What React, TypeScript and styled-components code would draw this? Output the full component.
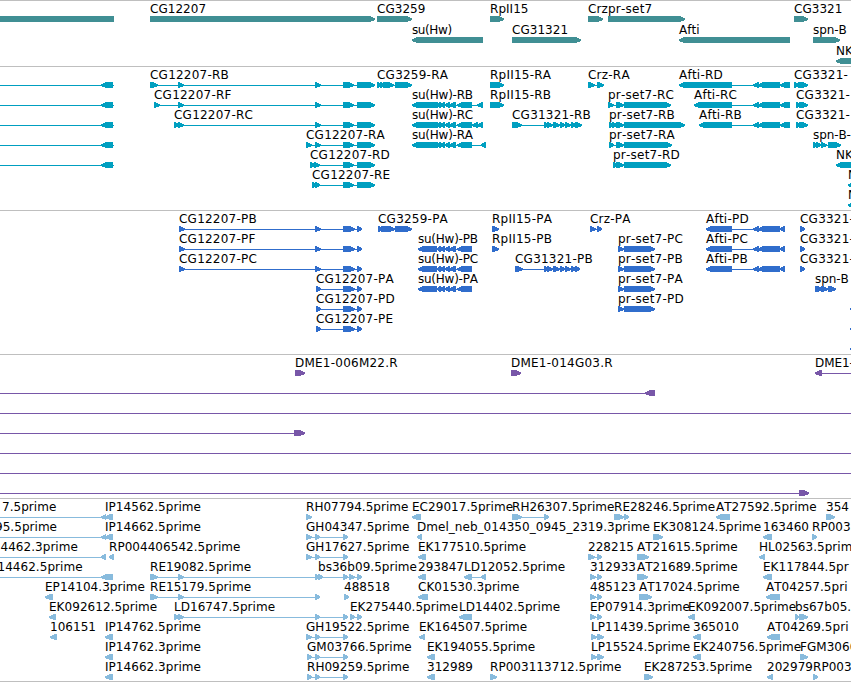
import styled, { createGlobalStyle } from 'styled-components'

type Dir = 'L' | 'R'

interface IFeature {
    label: string
    start: number
    end: number
    dir: Dir
    exons: number[]
}

interface ITrack {
    name: string
    color: string
    height: number
    gap?: number
    rows: IFeature[][]
}

// exons are flat [from, to, from, to...] pairs, none means one solid block
const R = (label: string, start: number, end: number, ...exons: number[]): IFeature =>
    ({ label, start, end, dir: 'R', exons: exons.length ? exons : [start, end] })

const L = (label: string, start: number, end: number, ...exons: number[]): IFeature =>
    ({ label, start, end, dir: 'L', exons: exons.length ? exons : [start, end] })

const rnaTail = [343, 354, 357, 375]
const rnaLong = [178, 184, 315, 321, ...rnaTail]
const cdsTail = [343, 355, 357, 362]
const suHw = [437, 441, 440, 445, 445, 450, 449, 456, 457, 472]
const afti = [753, 759, 758, 780]
const cg31321 = [544, 549, 547, 553, 553, 560, 560, 565, 565, 571, 571, 576]

const leftRna = L('', -20, 114, 101, 113)

const genes: IFeature[][] = [
    [
        L('', -20, 114),
        R('CG12207', 150, 375),
        R('CG3259', 377, 412),
        R('RpII15', 490, 504),
        R('Crz', 588, 603),
        R('pr-set7', 608, 685),
        R('CG3321', 794, 808),
    ],
    [
        L('su(Hw)', 412, 483),
        R('CG31321', 512, 581),
        L('Afti', 679, 790),
        R('spn-B', 813, 840),
    ],
    [L('NK', 836, 870)],
]

const transcripts: IFeature[][] = [
    [
        leftRna,
        R('CG12207-RB', 150, 375, 150, 158, ...rnaLong),
        R('CG3259-RA', 377, 412, 377, 381, 380, 385, 383, 394, 395, 412),
        R('RpII15-RA', 490, 504),
        R('Crz-RA', 588, 604, 588, 595, 597, 604),
        L('Afti-RD', 679, 790, 679, 732, ...afti, 780, 790),
        R('CG3321-', 794, 808, 794, 799, 798, 808),
    ],
    [
        leftRna,
        R('CG12207-RF', 154, 375, 154, 160, ...rnaLong),
        L('su(Hw)-RB', 412, 483, 412, 438, ...suHw, 477, 483),
        R('RpII15-RB', 490, 504),
        R('pr-set7-RC', 608, 671, 608, 614, 616, 624, 624, 671),
        L('Afti-RC', 694, 790, 694, 732, ...afti, 780, 790),
        R('CG3321-', 796, 808, 796, 800, 799, 808),
    ],
    [
        leftRna,
        R('CG12207-RC', 174, 375, 174, 179, ...rnaLong),
        L('su(Hw)-RC', 412, 483, 412, 438, ...suHw, 472, 478, 477, 483),
        R('CG31321-RB', 512, 582, 512, 522, ...cg31321, 575, 582),
        R('pr-set7-RB', 609, 685, 609, 613, 612, 617, 616, 624, 624, 685),
        L('Afti-RB', 699, 790, 699, 732, ...afti, 780, 790),
        R('CG3321-', 796, 808, 796, 800, 799, 808),
    ],
    [
        leftRna,
        R('CG12207-RA', 306, 375, 306, 312, 315, 321, ...rnaTail),
        L('su(Hw)-RA', 412, 486, 412, 438, ...suHw, 481, 486),
        R('pr-set7-RA', 609, 672, 609, 614, 616, 624, 624, 672),
        R('spn-B-', 813, 841, 813, 817, 816, 821, 821, 827, 828, 841),
    ],
    [
        leftRna,
        R('CG12207-RD', 310, 375, 310, 315, 314, 320, ...rnaTail),
        R('pr-set7-RD', 613, 671, 613, 618, 616, 624, 624, 671),
        L('NK', 836, 870),
    ],
    [
        R('CG12207-RE', 312, 375, 312, 316, 315, 320, ...rnaTail),
        L('N', 848, 870),
    ],
    [L('N', 848, 870)],
]

const proteins: IFeature[][] = [
    [
        R('CG12207-PB', 179, 362, 179, 185, 315, 321, ...cdsTail),
        R('CG3259-PA', 378, 412, 378, 382, 381, 386, 383, 395, 395, 412),
        R('RpII15-PA', 492, 499),
        R('Crz-PA', 590, 602, 590, 596, 597, 602),
        L('Afti-PD', 706, 785, 706, 732, ...afti, 780, 785),
        R('CG3321-', 800, 805),
    ],
    [
        R('CG12207-PF', 179, 362, 179, 185, 315, 321, ...cdsTail),
        L('su(Hw)-PB', 418, 472, 418, 437, ...suHw),
        R('RpII15-PB', 492, 499),
        R('pr-set7-PC', 618, 655, 618, 624, 624, 655),
        L('Afti-PC', 706, 785, 706, 732, ...afti, 780, 785),
        R('CG3321-', 800, 805),
    ],
    [
        R('CG12207-PC', 179, 362, 179, 185, 315, 321, ...cdsTail),
        L('su(Hw)-PC', 418, 472, 418, 437, ...suHw),
        R('CG31321-PB', 515, 580, 515, 523, ...cg31321, 575, 580),
        R('pr-set7-PB', 618, 655, 618, 624, 624, 655),
        L('Afti-PB', 706, 785, 706, 732, ...afti, 780, 785),
        R('CG3321-', 800, 805),
    ],
    [
        R('CG12207-PA', 316, 362, 316, 321, ...cdsTail),
        L('su(Hw)-PA', 418, 472, 418, 437, ...suHw),
        R('pr-set7-PA', 618, 655, 618, 624, 624, 655),
        R('spn-B', 815, 836, 815, 819, 817, 822, 821, 828, 828, 836),
    ],
    [
        R('CG12207-PD', 316, 362, 316, 321, ...cdsTail),
        R('pr-set7-PD', 618, 655, 618, 624, 624, 655),
        L('', 850, 870),
    ],
    [
        R('CG12207-PE', 316, 362, 316, 321, ...cdsTail),
        L('', 850, 870),
    ],
    [L('', 850, 870)],
]

const bacs: IFeature[][] = [
    [
        R('DME1-006M22.R', 295, 305),
        R('DME1-014G03.R', 511, 521),
        L('DME1-', 815, 870, 815, 822),
    ],
    [L('', -20, 655, 645, 655)],
    [L('', -20, 870, -20, -10)],
    [R('', -20, 305, 294, 305)],
    [L('', -20, 870, -20, -10)],
    [L('', -20, 870, -20, -10)],
    [R('', -20, 809, 799, 809)],
]

const ests: IFeature[][] = [
    [
        L('7.5prime', 2, 2),
        L('', -20, 106, 101, 107),
        L('IP14562.5prime', 105, 113),
        R('RH07794.5prime', 306, 312),
        L('EC29017.5prime', 412, 421),
        R('RH26307.5prime', 512, 549, 512, 522, 544, 549),
        R('RE28246.5prime', 614, 629, 614, 624, 624, 629),
        L('AT27592.5prime', 716, 730),
        R('354', 826, 835),
    ],
    [
        L('95.5prime', -5, -5),
        L('', -20, 106, 101, 107),
        L('IP14662.5prime', 105, 113),
        R('GH04347.5prime', 306, 348, 306, 312, 315, 320, 343, 348),
        L('Dmel_neb_014350_0945_2319.3prime', 417, 422),
        R('EK308124.5prime', 653, 663),
        L('163460', 763, 772),
        R('RP003', 812, 817),
    ],
    [
        L('4462.3prime', 0.5, 0.5),
        L('', -20, 106, 101, 106),
        L('RP004406542.5prime', 109, 114),
        R('GH17627.5prime', 306, 348, 306, 312, 315, 320, 343, 348),
        L('EK177510.5prime', 418, 426),
        R('228215', 588, 602, 588, 595, 597, 602),
        R('AT21615.5prime', 637, 649),
        L('HL02563.5prim', 759, 765),
    ],
    [
        L('14462.5prime', -2.5, -2.5),
        L('', -20, 113, 101, 113),
        R('RE19082.5prime', 150, 320, 150, 158, 178, 184, 315, 320),
        R('bs36b09.5prime', 318, 362, 318, 323, 343, 348, 349, 355, 357, 362),
        L('293847', 418, 426),
        L('LD12052.5prime', 464, 486, 464, 472, 481, 486),
        R('312933', 590, 602, 590, 596, 597, 602),
        R('AT21689.5prime', 637, 648),
        L('EK117844.5pr', 763, 772),
    ],
    [
        L('EP14104.3prime', 45, 53),
        R('RE15179.5prime', 150, 320, 150, 158, 178, 184, 315, 320),
        R('488518', 344, 349),
        L('CK01530.3prime', 418, 428),
        R('485123', 590, 602, 590, 596, 597, 602),
        R('AT17024.5prime', 639, 652),
        L('AT04257.5pri', 766, 780),
    ],
    [
        L('EK092612.5prime', 49, 56),
        R('LD16747.5prime', 174, 348, 174, 179, 178, 184, 315, 320, 343, 348),
        R('EK275440.5prime', 350, 362, 350, 355, 357, 362),
        L('LD14402.5prime', 459, 472),
        R('EP07914.3prime', 590, 602, 590, 596, 597, 602),
        L('EK092007.5prime', 688, 695),
        R('bs67b05.', 795, 808, 795, 799, 799, 808),
    ],
    [
        L('106151', 50, 57),
        L('IP14762.5prime', 105, 113),
        R('GH19522.5prime', 306, 348, 306, 312, 315, 320, 343, 348),
        L('EK164507.5prime', 419, 425),
        R('LP11439.5prime', 591, 604, 591, 597, 597, 604),
        L('365010', 693, 701),
        L('AT04269.5pri', 767, 780),
    ],
    [
        L('IP14762.3prime', 105, 113),
        R('GM03766.5prime', 307, 348, 307, 312, 315, 320, 343, 348),
        L('EK194055.5prime', 427, 435),
        R('LP15524.5prime', 591, 604, 591, 597, 597, 604),
        L('EK240756.5prime', 693, 701),
        R('FGM3060', 800, 808),
    ],
    [
        L('IP14662.3prime', 105, 113),
        R('RH09259.5prime', 307, 348, 307, 312, 315, 320, 343, 348),
        L('312989', 427, 435),
        R('RP003113712.5prime', 490, 497),
        R('EK287253.5prime', 644, 653),
        L('202979', 767, 773),
        R('RP003', 813, 818),
    ],
]

const tracks: ITrack[] = [
    { name: 'genes', color: '#408f94', height: 66, gap: 1, rows: genes },
    { name: 'transcripts', color: '#009fc0', height: 144, rows: transcripts },
    { name: 'proteins', color: '#306dcc', height: 144, rows: proteins },
    { name: 'bacs', color: '#7857a8', height: 144, rows: bacs },
    { name: 'ests', color: '#88bbdd', height: 183, rows: ests },
]

const GlobalStyle = createGlobalStyle`
    body {
        margin: 0;
        background: #fff;
        overflow: hidden;
    }
`

const Browser = styled.main`
    width: 851px;
    height: 682px;
    box-sizing: border-box;
    display: flex;
    flex-direction: column;
    overflow: hidden;
    border-bottom: 1px solid #bfbfbf;
    font-family: "DejaVu Sans", sans-serif;
    font-size: 12px;
    font-kerning: none;
    color: #000;
`

const TrackPanel = styled.section<{ $height: number; $gap: number }>`
    flex: none;
    height: ${p => p.$height}px;
    box-sizing: border-box;
    display: flex;
    flex-direction: column;
    gap: ${p => p.$gap}px;
    padding-top: 1px;
    border-top: 1px solid #bfbfbf;
    overflow: hidden;
`

// every feature of a row shares the one cell, its margin moves it to its start
const Row = styled.div`
    flex: none;
    display: grid;
    grid-template-columns: 851px;
    height: 20px;
`

const FeatureBox = styled.div`
    grid-area: 1 / 1;
    display: flex;
    flex-direction: column;
    align-items: flex-start;
    width: max-content;
`

const Label = styled.span<{ $spacing: number }>`
    height: 14px;
    line-height: 14px;
    letter-spacing: ${p => p.$spacing}px;
    white-space: nowrap;
`

const Glyph = styled.svg<{ $color: string }>`
    display: block;
    flex: none;
    fill: ${p => p.$color};
    shape-rendering: crispEdges;
`

const HEAD = 6

const exonPoints = (from: number, to: number, dir: Dir) => {
    const head = Math.min(HEAD, to - from) - 1
    return dir === 'R'
        ? `${from},0 ${to - head},0 ${to},2.4 ${to},4 ${to - head},6 ${from},6`
        : `${to},0 ${from + head},0 ${from},2.4 ${from},4 ${from + head},6 ${to},6`
}

const labelSpacing = (label: string) => {
    if (label.includes('(')) return label.includes('-') ? -0.25 : -0.4
    if (label.startsWith('spn') || label === 'DME1-') return -0.1
    return label.includes('-') ? 0.23 : 0.04
}

function Feature({ feature, color }: { feature: IFeature; color: string }) {
    const { label, start, end, dir, exons } = feature
    const width = end - start
    const shapes = []
    for (let i = 0; i < exons.length; i += 2) {
        shapes.push(
            <polygon key={i} points={exonPoints(exons[i] - start, exons[i + 1] - start, dir)} />
        )
    }

    return (
        <FeatureBox style={{ marginLeft: start }}>
            <Label $spacing={labelSpacing(label)}>{label}</Label>
            {width > 0 && (
                <Glyph $color={color} width={width} height={6}>
                    <rect x={0} y={3} width={width} height={1} />
                    {shapes}
                </Glyph>
            )}
        </FeatureBox>
    )
}

function App() {
    return (
        <>
            <GlobalStyle />
            <Browser>
                {tracks.map(track => (
                    <TrackPanel key={track.name} $height={track.height} $gap={track.gap ?? 0}>
                        {track.rows.map((row, i) => (
                            <Row key={i}>
                                {row.map((feature, j) => (
                                    <Feature key={j} feature={feature} color={track.color} />
                                ))}
                            </Row>
                        ))}
                    </TrackPanel>
                ))}
            </Browser>
        </>
    )
}

export default App
